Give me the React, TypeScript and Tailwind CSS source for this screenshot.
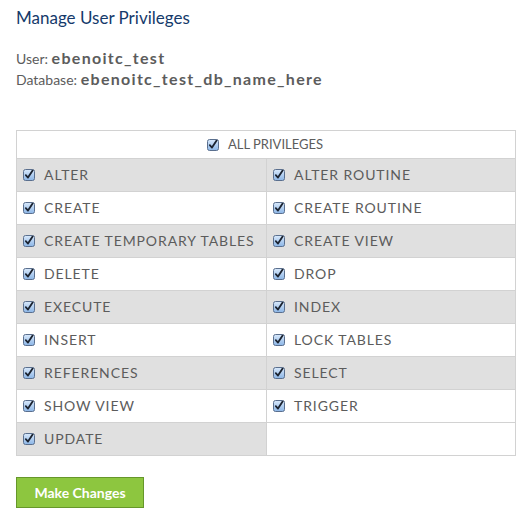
const privileges: [string, string | null][] = [
  ["ALTER", "ALTER ROUTINE"],
  ["CREATE", "CREATE ROUTINE"],
  ["CREATE TEMPORARY TABLES", "CREATE VIEW"],
  ["DELETE", "DROP"],
  ["EXECUTE", "INDEX"],
  ["INSERT", "LOCK TABLES"],
  ["REFERENCES", "SELECT"],
  ["SHOW VIEW", "TRIGGER"],
  ["UPDATE", null],
];

function Check() {
  return (
    <svg width="12" height="12" viewBox="0 0 12 12" className="shrink-0">
      <defs>
        <linearGradient id="cb" x1="0" y1="0" x2="0" y2="1">
          <stop offset="0" stopColor="#d9e9fb" />
          <stop offset="1" stopColor="#8bb5e6" />
        </linearGradient>
      </defs>
      <rect x="0.5" y="0.5" width="11" height="11" rx="2" fill="url(#cb)" stroke="#5a6f8e" />
      <path d="M2.8 6.2 L5 8.6 L9.6 1.6" fill="none" stroke="#1b2330" strokeWidth="1.8" strokeLinecap="round" strokeLinejoin="round" />
    </svg>
  );
}

function Cell({ label, gray, last }: { label: string | null; gray: boolean; last?: boolean }) {
  return (
    <div
      className={`flex h-[33px] items-center gap-[9px] border-t border-[#d2d2d2] pl-[6px] ${
        last ? "" : "border-r"
      } ${gray && label ? "bg-[#e0e0e0]" : "bg-white"}`}
    >
      {label && (
        <>
          <Check />
          <span className="text-[14px] leading-none tracking-[0.9px]">{label}</span>
        </>
      )}
    </div>
  );
}

export default function App() {
  return (
    <main
      className="min-h-screen bg-white px-4 pt-[7px] text-[#5c5c5c]"
      style={{ fontFamily: "Lato, 'Open Sans', sans-serif" }}
    >
      <h1 className="text-[17px] leading-[22px] text-[#153a6b]">Manage User Privileges</h1>
      <div className="mt-[19px] text-[14px]">
        <p className="h-[21px] leading-[21px]">
          User: <b className="text-[16px] font-bold leading-none tracking-[1.3px]">ebenoitc_test</b>
        </p>
        <p className="h-[21px] leading-[21px]">
          Database: <b className="text-[16px] font-bold leading-none tracking-[1.3px]">ebenoitc_test_db_name_here</b>
        </p>
      </div>

      <div className="mt-[40px] w-[500px] border-b border-l border-r border-[#d2d2d2]">
        <div className="flex h-[28px] items-center justify-center gap-[9px] border-t border-[#d2d2d2] bg-white pr-[2px]">
          <Check />
          <span className="text-[13px] leading-none">ALL PRIVILEGES</span>
        </div>
        <div className="grid grid-cols-[250px_1fr]">
          {privileges.map(([a, b], i) => (
            <div key={a} className="contents">
              <Cell label={a} gray={i % 2 === 0} />
              <Cell label={b} gray={i % 2 === 0} last />
            </div>
          ))}
        </div>
      </div>

      <button className="mt-[21px] h-[31px] w-[128px] border border-[#66972a] bg-[#8dc63f] text-[14px] font-bold text-white">
        Make Changes
      </button>
    </main>
  );
}
